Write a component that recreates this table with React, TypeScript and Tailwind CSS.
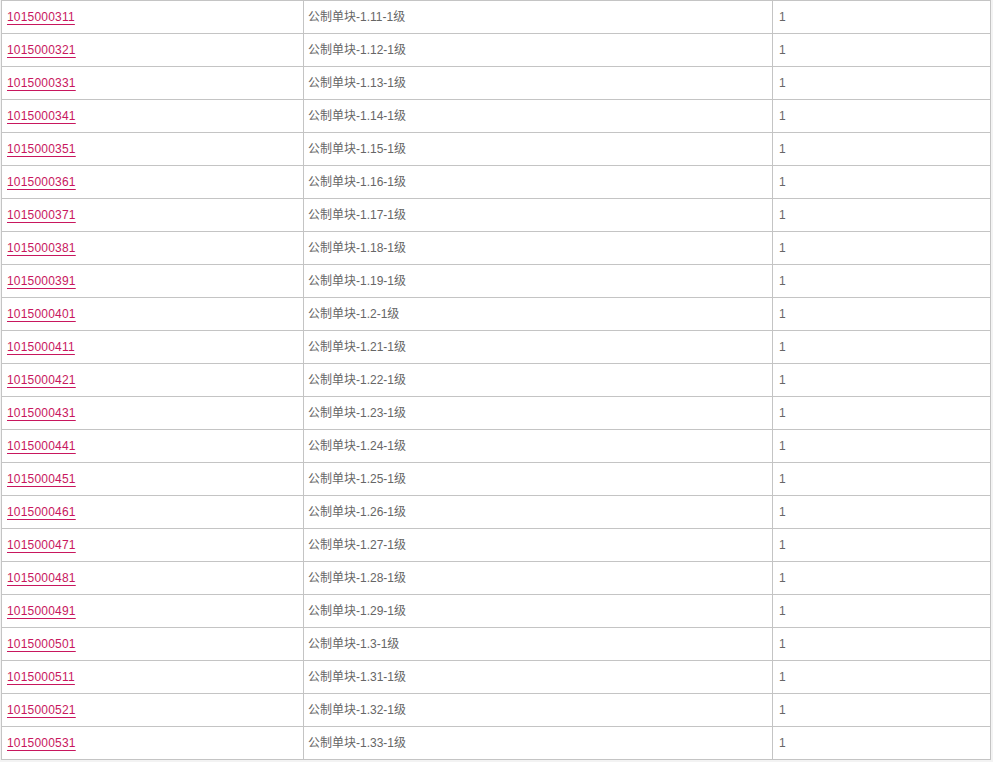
const rows = [
  ['1015000311', '公制单块-1.11-1级'],
  ['1015000321', '公制单块-1.12-1级'],
  ['1015000331', '公制单块-1.13-1级'],
  ['1015000341', '公制单块-1.14-1级'],
  ['1015000351', '公制单块-1.15-1级'],
  ['1015000361', '公制单块-1.16-1级'],
  ['1015000371', '公制单块-1.17-1级'],
  ['1015000381', '公制单块-1.18-1级'],
  ['1015000391', '公制单块-1.19-1级'],
  ['1015000401', '公制单块-1.2-1级'],
  ['1015000411', '公制单块-1.21-1级'],
  ['1015000421', '公制单块-1.22-1级'],
  ['1015000431', '公制单块-1.23-1级'],
  ['1015000441', '公制单块-1.24-1级'],
  ['1015000451', '公制单块-1.25-1级'],
  ['1015000461', '公制单块-1.26-1级'],
  ['1015000471', '公制单块-1.27-1级'],
  ['1015000481', '公制单块-1.28-1级'],
  ['1015000491', '公制单块-1.29-1级'],
  ['1015000501', '公制单块-1.3-1级'],
  ['1015000511', '公制单块-1.31-1级'],
  ['1015000521', '公制单块-1.32-1级'],
  ['1015000531', '公制单块-1.33-1级'],
];

export default function App() {
  return (
    <div
      className="min-h-screen bg-[#f3f3f3] pl-px text-[12px] text-[#666]"
      style={{ fontFamily: '"Liberation Sans", Arial, "Noto Sans CJK SC", sans-serif' }}
    >
      <table className="w-[990px] border-collapse bg-white">
        <tbody>
          {rows.map(([code, name]) => (
            <tr key={code}>
              <td className="h-[33px] w-[302px] border border-[#c4c4c4] px-[5px] align-middle">
                <a
                  href="#"
                  className="tracking-[0.2px] text-[#c8175e] underline decoration-[#c8175e] underline-offset-[3px]"
                >
                  {code}
                </a>
              </td>
              <td className="h-[33px] w-[469px] border border-[#c4c4c4] px-[4px] align-middle">{name}</td>
              <td className="h-[33px] border border-[#c4c4c4] px-[6px] align-middle">1</td>
            </tr>
          ))}
        </tbody>
      </table>
    </div>
  );
}
